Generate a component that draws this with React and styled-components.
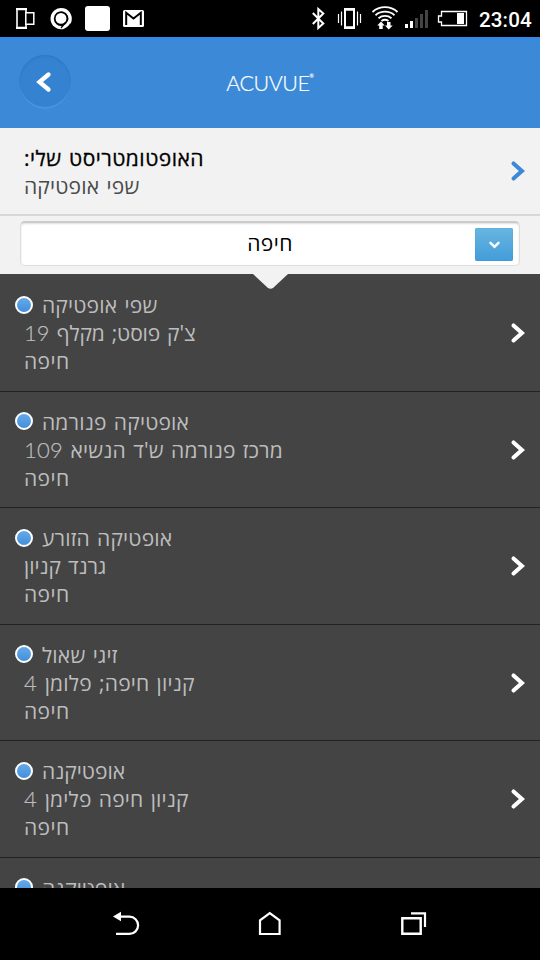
import React from "react";
import styled, { createGlobalStyle } from "styled-components";

const GlobalStyle = createGlobalStyle`
  * { box-sizing: border-box; }
  body { margin: 0; background: #000; }
`;

const Screen = styled.div`
  width: 540px;
  height: 960px;
  display: flex;
  flex-direction: column;
  overflow: hidden;
  background: #000;
  font-family: "Open Sans", "Noto Sans", sans-serif;
`;

const StatusBar = styled.div`
  height: 37px;
  flex: none;
  display: flex;
  justify-content: space-between;
  background: #000;
  color: #fff;
  svg { display: block; }
`;

const StatusEnd = styled.div`
  display: flex;
`;

const Clock = styled.div`
  width: 67px;
  padding-left: 6px;
  font: 500 20.6px/40px Roboto, sans-serif;
  letter-spacing: 0.1px;
`;

const TitleBar = styled.header`
  height: 91px;
  flex: none;
  display: grid;
  grid-template-columns: 90px 1fr 90px;
  align-items: center;
  background: linear-gradient(#3687e2, #3c8ad7 8px);
`;

const BackButton = styled.button`
  width: 52px;
  height: 54px;
  margin: 0 0 1px 19px;
  padding: 0;
  border: 0;
  border-radius: 50%;
  background: #3482d0;
  box-shadow: inset 0 1px 2px #2d76be, inset 0 -2px 1px #4c98df;
  svg { display: block; }
`;

const Brand = styled.div`
  display: flex;
  justify-content: center;
  color: #fff;
  font: 300 21.5px/28px Lato, sans-serif;
  letter-spacing: -0.5px;
  -webkit-text-stroke: 0.2px #fff;
  sup { font-size: 5px; line-height: 14px; letter-spacing: 0; }
`;

const Current = styled.section`
  height: 88px;
  flex: none;
  display: flex;
  justify-content: space-between;
  padding: 16px 12px 0 24px;
  background: #f2f2f2;
  border-bottom: 2px solid #d8d8d8;
`;

const Lines = styled.div`
  display: flex;
  flex-direction: column;
  align-items: flex-start;
`;

const Line = styled.div`
  height: 28px;
  line-height: 28px;
  font-size: 21px;
  white-space: pre;
  color: ${(p) => p.$color || "#bdbdbd"};
  letter-spacing: ${(p) => p.$spacing ?? 0.18}px;
  word-spacing: 1.6px;
  font-weight: 400;
`;

const Heading = styled(Line)`
  color: #000;
  letter-spacing: 0.48px;
  -webkit-text-stroke: 0.3px #000;
`;

const Number = styled.span`
  font-family: Lato, sans-serif;
  font-size: 22px;
  font-weight: 300;
  line-height: 1;
  -webkit-text-stroke: 0.2px #bdbdbd;
`;

const Picker = styled.section`
  position: relative;
  z-index: 1;
  height: 58px;
  flex: none;
  padding: 5px 20px 0;
  background: #f2f2f2;
`;

const Select = styled.div`
  height: 45px;
  display: grid;
  grid-template-columns: 38px 1fr 38px;
  align-items: center;
  padding: 0 6px;
  border: 1px solid #dedede;
  border-top: 2px solid #cbcbcb;
  border-radius: 5px;
  background: #fff;
  box-shadow: inset 0 1px 2px #dedede;
`;

const SelectValue = styled.div`
  grid-column: 2;
  display: flex;
  justify-content: center;
  margin-bottom: 2px;
`;

const DropButton = styled.div`
  width: 38px;
  height: 33px;
  margin-top: 1px;
  border-radius: 2px;
  background: linear-gradient(#68b5e0, #429dd9);
  box-shadow: inset 0 0 1px #318bc4;
  svg { display: block; }
`;

const Pointer = styled.svg`
  position: absolute;
  left: 252px;
  top: 57px;
`;

const List = styled.main`
  flex: 1;
  min-height: 0;
  overflow: hidden;
  background: #444;
`;

const Row = styled.article`
  height: 116.5px;
  display: flex;
  justify-content: space-between;
  padding: 16px 12px 0 24px;
  border-bottom: 1px solid #222;
  &:first-child { height: 117.5px; padding-top: 17px; }
`;

const NameLine = styled.div`
  display: flex;
  align-items: center;
  gap: 9px;
  height: 28px;
  margin-left: -9px;
`;

const Dot = styled.span`
  width: 18px;
  height: 18px;
  margin-top: -1px;
  border: 2px solid #fff;
  border-radius: 50%;
  background: linear-gradient(#66a9e8, #438fdc);
`;

const RowArrow = styled.svg`
  flex: none;
  margin-top: ${(p) => p.$top}px;
`;

const NavBar = styled.nav`
  height: 72px;
  flex: none;
  display: flex;
  justify-content: center;
  gap: 112px;
  padding-top: 20px;
`;

const shops = [
  { name: "שפי אופטיקה", street: "צ'ק פוסט; מקלף", number: "19", spacing: -0.12 },
  { name: "אופטיקה פנורמה", street: "מרכז פנורמה ש'ד הנשיא", number: "109" },
  { name: "אופטיקה הזורע", street: "גרנד קניון", spacing: -0.05 },
  { name: "זיגי שאול", street: "קניון חיפה; פלומן", number: "4" },
  { name: "אופטיקנה", street: "קניון חיפה פלימן", number: "4" },
  { name: "אופטיקנה" },
];

function Arrow({ color, top }) {
  return (
    <RowArrow width="18" height="22" viewBox="0 0 18 22" $top={top} fill="none">
      <path d="M3.5 3.5 11.9 11 3.5 18.5" stroke={color} strokeWidth="4.1" strokeLinecap="round" />
    </RowArrow>
  );
}

function NotificationIcons() {
  return (
    <svg width="160" height="37" fill="none" stroke="#fff">
      <path d="M17 9.5h9v18h-9z" strokeWidth="1.6" />
      <path d="M16 9h11M16 28h11" strokeWidth="2" />
      <path d="M25.8 12.8h8v11.5h-8z" fill="#000" strokeWidth="1.5" />
      <path d="M63.5 27.3A9 9 0 1 1 69 23" strokeWidth="3.3" />
      <circle cx="61" cy="18.4" r="5.4" fill="#fff" stroke="none" />
      <path d="M69 22q-1.5 3.8-6 5.5" strokeWidth="3" />
      <path d="M65.500 22.500 61 28" stroke="#000" strokeWidth="1.200" />
      <rect x="85" y="6" width="25" height="25" rx="3" fill="#fff" stroke="none" />
      <rect x="123" y="10" width="21" height="17" rx="1.5" fill="#fff" stroke="none" />
      <path d="M126.2 25V12.7l7.3 5.8 7.3-5.8V25" stroke="#000" strokeWidth="2" />
    </svg>
  );
}

function SystemIcons() {
  return (
    <svg width="174" height="37" viewBox="300 0 174 37" fill="none" stroke="#fff">
      <path d="m313.8 13 10.5 10.5-5 4.5V9l5 4.500-10.500 10.500" strokeWidth="2" />
      <path d="M346 9v19h9V9z" strokeWidth="2" />
      <path d="M345 9.5h11M345 27.5h11" strokeWidth="2.4" />
      <path d="M339.5 14v9M342.5 11.5v14M358.5 11.5v14M361.5 14v9" strokeWidth="1.2" />
      <path d="M373.5 12c7-6.4 18-6.4 25 0M376.5 15.2c5.4-4.7 13.6-4.7 19 0M379.5 18.2c3.8-3 9.2-3 13 0M382.5 21c2-1.4 5-1.4 7 0" strokeWidth="1.8" />
      <path d="m382 21.5 3.7 4h-2V29h-3.5v-3.5h-2zM389.7 29.5l4-4h-2.2V22H388v3.5h-2z" fill="#fff" stroke="none" />
      <path d="M406 24h3v4h-3zM411 21h3v7h-3z" fill="#fff" stroke="none" />
      <path d="M416 18h3v10h-3zM421 14h3v14h-3zM426 10h3v18h-3z" fill="#444" stroke="none" />
      <path d="M442.5 11.5h25v14h-25v-3.5h-3v-6h3z" strokeWidth="1.3" />
      <path d="M458 13h7v11h-7z" fill="#fff" stroke="none" />
    </svg>
  );
}

export default function App() {
  return (
    <>
      <GlobalStyle />
      <Screen>
        <StatusBar>
          <NotificationIcons />
          <StatusEnd>
            <SystemIcons />
            <Clock>23:04</Clock>
          </StatusEnd>
        </StatusBar>
        <TitleBar>
          <BackButton aria-label="Back">
            <svg width="52" height="54" fill="none" stroke="#fff" strokeWidth="4.3" strokeLinecap="round">
              <path d="M29.5 19.5 20.5 27l9 7.5" />
            </svg>
          </BackButton>
          <Brand>ACUVUE<sup>®</sup></Brand>
        </TitleBar>
        <Current>
          <Lines>
            <Heading dir="rtl">האופטומטריסט שלי:</Heading>
            <Line dir="rtl" $color="#4a4a4a">שפי אופטיקה</Line>
          </Lines>
          <Arrow color="#3c8ad7" top={16} />
        </Current>
        <Picker>
          <Select>
            <SelectValue><Line dir="rtl" $color="#000" $spacing={0.4}>חיפה</Line></SelectValue>
            <DropButton>
              <svg width="38" height="33" fill="none" stroke="#fff" strokeWidth="2.5" strokeLinecap="round">
                <path d="m15.5 14.8 4 4 4-4" />
              </svg>
            </DropButton>
          </Select>
          <Pointer width="37" height="16"><path d="M0 0h37v1h-1L21 15q-2.5 1.5-5 0L1 1H0z" fill="#f2f2f2" /></Pointer>
        </Picker>
        <List>
          {shops.map((shop, i) => (
            <Row key={i}>
              <Lines>
                <NameLine>
                  <Dot />
                  <Line dir="rtl" $spacing={shop.name.includes(" ") ? 0.18 : 0}>{shop.name}</Line>
                </NameLine>
                {shop.street && (
                  <>
                    <Line dir="rtl" $spacing={shop.spacing}>{shop.street}{shop.number && <Number> {shop.number}</Number>}</Line>
                    <Line dir="rtl" $spacing={0.4}>חיפה</Line>
                  </>
                )}
              </Lines>
              <Arrow color="#fff" top={31} />
            </Row>
          ))}
        </List>
        <NavBar>
          <svg width="32" height="32" viewBox="110 908 32 32" fill="none" stroke="#fff" strokeWidth="2.2">
            <path d="M119 916.7h10.5a8.6 8.6 0 0 1 0 17.2H116" />
            <path d="m113 916.5 8-4.8v9.6z" fill="#fff" stroke="none" />
          </svg>
          <svg width="32" height="32" viewBox="254 908 32 32" fill="none" stroke="#fff" strokeWidth="2.2">
            <path d="M260 934v-13.7l9.8-7.3 9.8 7.3V934z" />
          </svg>
          <svg width="32" height="32" viewBox="398 908 32 32" fill="none" stroke="#fff" strokeWidth="2.4">
            <path d="M402.3 918.3h18.4v15.5h-18.4z" />
            <path d="M411 913.3h14V927" strokeWidth="2.2" />
          </svg>
        </NavBar>
      </Screen>
    </>
  );
}
